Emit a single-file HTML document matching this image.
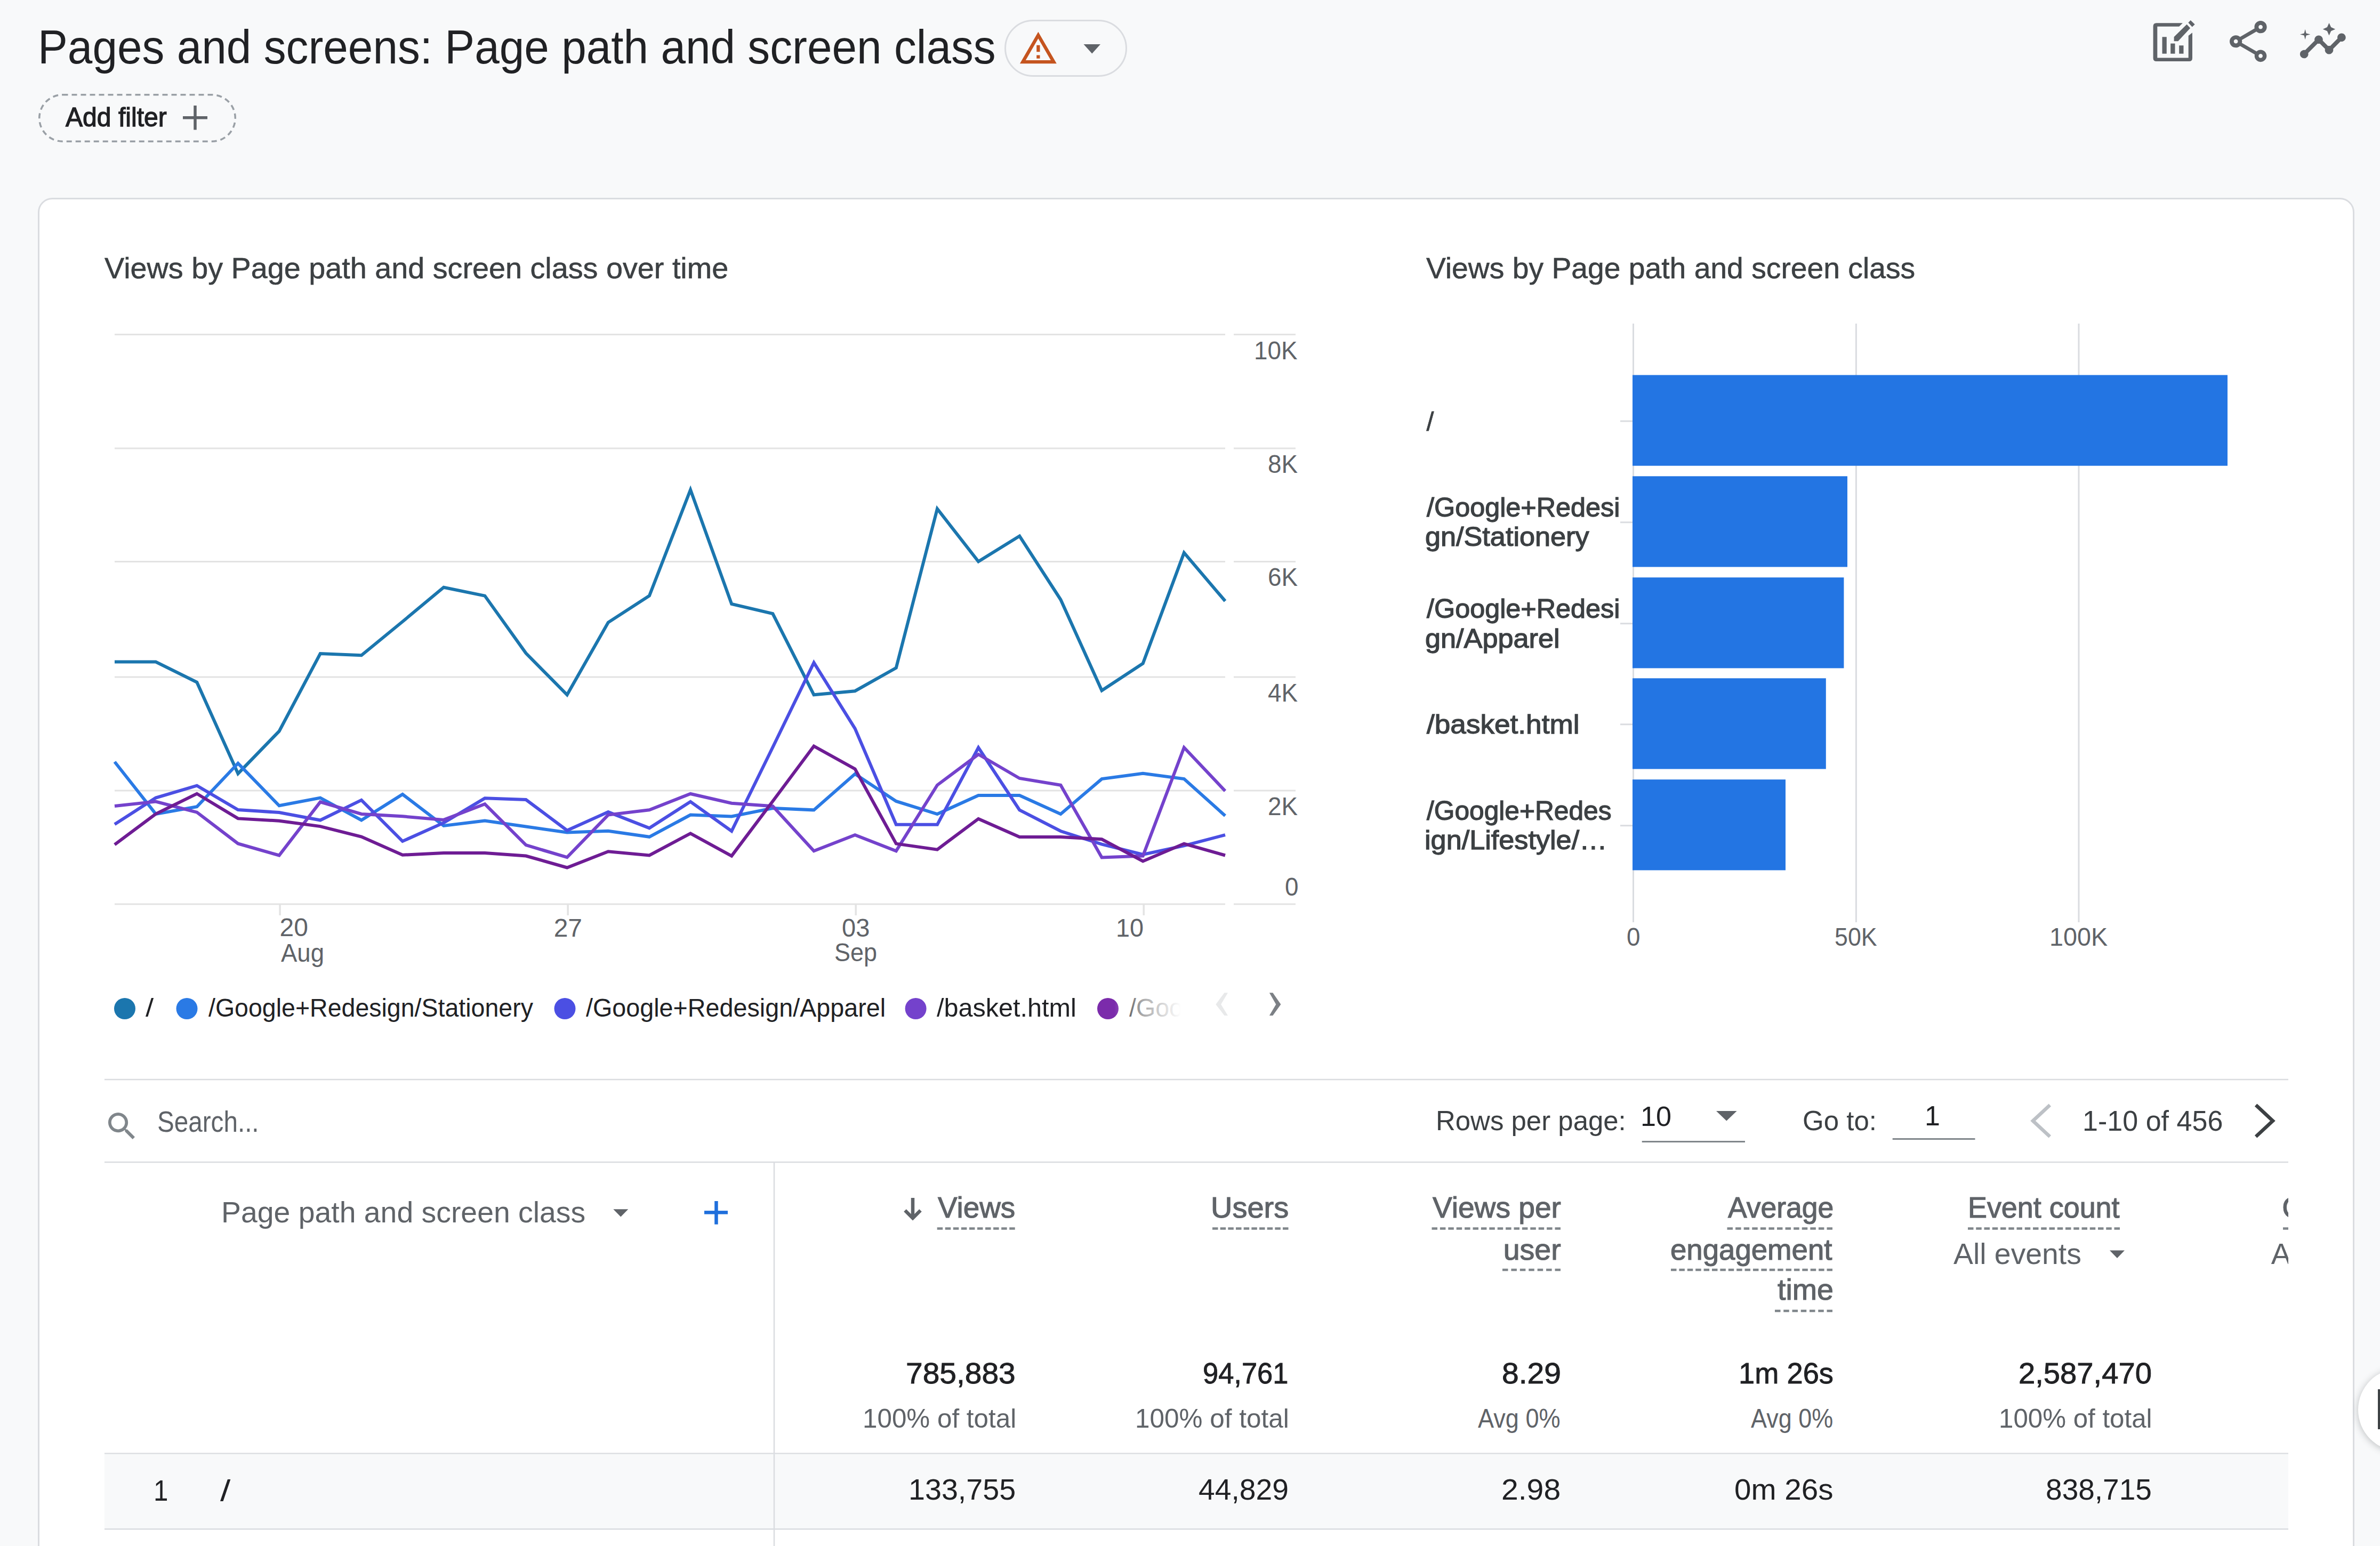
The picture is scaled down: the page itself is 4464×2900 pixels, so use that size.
<!DOCTYPE html>
<html><head><meta charset="utf-8"><title>Pages and screens</title>
<style>
html,body{margin:0;padding:0;}
@media (min-width:2200px) and (max-width:2260px){html{zoom:0.5;}}
@media (min-width:1470px) and (max-width:1500px){html{zoom:0.33333;}}
body{width:4464px;height:2900px;overflow:hidden;background:#f8f9fa;position:relative;font-family:"Liberation Sans",sans-serif;}
.card{position:absolute;left:70.5px;top:370.5px;width:4345px;height:2700px;background:#fff;border:3px solid #dadce0;border-radius:27px;box-sizing:border-box;}
.ov{position:absolute;left:0;top:0;}
.t{position:absolute;white-space:nowrap;transform-origin:0 0;font-family:"Liberation Sans",sans-serif;}
.fade{position:absolute;left:2090px;top:1850px;width:175px;height:80px;background:linear-gradient(90deg,rgba(255,255,255,0) 0px,rgba(255,255,255,0.6) 50px,#fff 125px,#fff 175px);}
.fab{position:absolute;left:4423px;top:2567px;width:155px;height:155px;border-radius:50%;background:#fff;box-shadow:0 2px 14px rgba(60,64,67,.32);}
.fab i{position:absolute;left:37px;top:39px;width:5px;height:75px;background:#3c4043;}
.clipC{position:absolute;left:196px;top:2180px;width:4096px;height:300px;overflow:hidden;}
</style></head><body>
<div class="card"></div>
<svg class="ov" width="4464" height="2900" viewBox="0 0 4464 2900"><rect x="1885.5" y="38.5" width="227" height="104" rx="52" fill="none" stroke="#dadce0" stroke-width="3"/>
<g transform="translate(1909.8 53.5) scale(3.13)"><path fill="#c5541f" d="M12 5.99L19.53 19H4.47L12 5.99M12 2L1 21h22L12 2zm1 14h-2v2h2v-2zm0-6h-2v4h2v-4z"/></g>
<path d="M2032.50 83.00L2064.00 83.00L2048.25 100.50Z" fill="#5f6368" stroke="none" stroke-width="0.00" />
<rect x="73.75" y="177.75" width="367.5" height="87.5" rx="43.75" fill="none" stroke="#9aa0a6" stroke-width="3.5" stroke-dasharray="10 7"/>
<rect x="343.00" y="218.00" width="46.00" height="5.50" fill="#5f6368" />
<rect x="363.25" y="198.00" width="5.50" height="45.50" fill="#5f6368" />
<path d="M4093.9 43.2 L4044.6 43.2 Q4038.6 43.2 4038.6 49.2 L4038.6 109.1 Q4038.6 115.1 4044.6 115.1 L4106 115.1 Q4112 115.1 4112 109.1 L4112 61.3 L4104.7 66.9 L4104.7 108.4 L4046.3 108.4 L4046.3 49.7 L4087.2 49.7 Z" fill="#5f6368"/>
<rect x="4055.50" y="69.30" width="8.30" height="31.40" fill="#5f6368" />
<rect x="4071.20" y="81.60" width="8.30" height="19.10" fill="#5f6368" />
<rect x="4087.20" y="85.30" width="8.30" height="15.40" fill="#5f6368" />
<path d="M4077.6 69.3 L4101.6 45.7 L4108.1 52.7 L4085.3 77.3 L4077.6 77.3 Z" fill="#5f6368" stroke="none" stroke-width="0.00" />
<path d="M4108.7 38 L4116.7 45.7 L4111.7 50.5 L4104.4 42.6 Z" fill="#5f6368" stroke="none" stroke-width="0.00" />
<g transform="translate(4170.4 31.3) scale(3.87)"><path fill="#5f6368" d="M18 16.08c-.76 0-1.44.3-1.96.77L8.91 12.7c.05-.23.09-.46.09-.7s-.04-.47-.09-.7l7.05-4.11c.54.5 1.25.81 2.04.81 1.66 0 3-1.34 3-3s-1.34-3-3-3-3 1.34-3 3c0 .24.04.47.09.7L8.04 9.81C7.5 9.31 6.79 9 6 9c-1.66 0-3 1.34-3 3s1.34 3 3 3c.79 0 1.5-.31 2.04-.81l7.12 4.16c-.05.21-.08.43-.08.65 0 1.61 1.31 2.92 2.92 2.92s2.92-1.310 2.92-2.92-1.31-2.92-2.92-2.92zM18 4c.55 0 1 .45 1 1s-.45 1-1 1-1-.45-1-1 .45-1 1-1zM6 13c-.55 0-1-.45-1-1s.45-1 1-1 1 .45 1 1-.45 1-1 1zm12 7.02c-.55 0-1-.45-1-1s.45-1 1-1 1 .45 1 1-.45 1-1 1z"/></g>
<g transform="translate(4310 31.3) scale(3.9)"><path fill="#5f6368" d="M21 8c-1.45 0-2.26 1.44-1.930 2.51l-3.550 3.56c-.3-.09-.74-.09-1.04 0l-2.55-2.55C12.27 10.45 11.46 9 10 9c-1.45 0-2.27 1.44-1.93 2.52l-4.56 4.55C2.44 15.74 1 16.55 1 18c0 1.1.9 2 2 2 1.45 0 2.26-1.44 1.93-2.51l4.55-4.56c.3.09.74.09 1.04 0l2.55 2.55C12.73 16.55 13.54 18 15 18c1.45 0 2.27-1.44 1.93-2.52l3.56-3.55c1.07.33 2.51-.48 2.51-1.93 0-1.1-.9-2-2-2z"/><path fill="#5f6368" d="M15 9l.94-2.07L18 6l-2.06-.93L15 3l-.92 2.07L12 6l2.08.93zM3.5 11L4 9l2-.5L4 8l-.5-2L3 8l-2 .5L3 9z"/></g>
<line x1="215.00" y1="627.50" x2="2298.00" y2="627.50" stroke="#e3e3e3" stroke-width="3.00" />
<line x1="2314.00" y1="627.50" x2="2430.00" y2="627.50" stroke="#e3e3e3" stroke-width="3.00" />
<line x1="215.00" y1="841.00" x2="2298.00" y2="841.00" stroke="#e3e3e3" stroke-width="3.00" />
<line x1="2314.00" y1="841.00" x2="2430.00" y2="841.00" stroke="#e3e3e3" stroke-width="3.00" />
<line x1="215.00" y1="1053.50" x2="2298.00" y2="1053.50" stroke="#e3e3e3" stroke-width="3.00" />
<line x1="2314.00" y1="1053.50" x2="2430.00" y2="1053.50" stroke="#e3e3e3" stroke-width="3.00" />
<line x1="215.00" y1="1270.00" x2="2298.00" y2="1270.00" stroke="#e3e3e3" stroke-width="3.00" />
<line x1="2314.00" y1="1270.00" x2="2430.00" y2="1270.00" stroke="#e3e3e3" stroke-width="3.00" />
<line x1="215.00" y1="1483.00" x2="2298.00" y2="1483.00" stroke="#e3e3e3" stroke-width="3.00" />
<line x1="2314.00" y1="1483.00" x2="2430.00" y2="1483.00" stroke="#e3e3e3" stroke-width="3.00" />
<line x1="215.00" y1="1696.00" x2="2298.00" y2="1696.00" stroke="#e3e3e3" stroke-width="3.00" />
<line x1="2314.00" y1="1696.00" x2="2430.00" y2="1696.00" stroke="#e3e3e3" stroke-width="3.00" />
<line x1="525.09" y1="1695.00" x2="525.09" y2="1717.00" stroke="#e3e3e3" stroke-width="3.50" />
<line x1="1065.13" y1="1695.00" x2="1065.13" y2="1717.00" stroke="#e3e3e3" stroke-width="3.50" />
<line x1="1605.17" y1="1695.00" x2="1605.17" y2="1717.00" stroke="#e3e3e3" stroke-width="3.50" />
<line x1="2145.20" y1="1695.00" x2="2145.20" y2="1717.00" stroke="#e3e3e3" stroke-width="3.50" />
<polyline points="215.00,1241.60 292.15,1241.60 369.30,1279.70 446.44,1451.20 523.59,1371.60 600.74,1226.00 677.89,1229.20 755.04,1166.00 832.19,1101.70 909.33,1117.60 986.48,1225.30 1063.63,1303.30 1140.78,1167.60 1217.93,1117.60 1295.07,918.70 1372.22,1133.00 1449.37,1151.20 1526.52,1303.30 1603.67,1296.20 1680.81,1252.80 1757.96,954.40 1835.11,1053.30 1912.26,1005.50 1989.41,1124.80 2066.56,1295.20 2143.70,1244.60 2220.85,1036.90 2298.00,1127.50" fill="none" stroke="#1b76ae" stroke-width="6" stroke-linejoin="miter" stroke-miterlimit="10"/>
<polyline points="215.00,1429.00 292.15,1526.90 369.30,1513.30 446.44,1431.80 523.59,1511.30 600.74,1496.60 677.89,1538.50 755.04,1490.00 832.19,1548.90 909.33,1539.60 986.48,1550.50 1063.63,1561.50 1140.78,1558.80 1217.93,1569.80 1295.07,1528.60 1372.22,1531.50 1449.37,1516.00 1526.52,1519.40 1603.67,1451.80 1680.81,1502.90 1757.96,1527.00 1835.11,1491.90 1912.26,1491.90 1989.41,1527.00 2066.56,1461.10 2143.70,1450.70 2220.85,1461.10 2298.00,1530.30" fill="none" stroke="#2a7ae5" stroke-width="6" stroke-linejoin="miter" stroke-miterlimit="10"/>
<polyline points="215.00,1546.30 292.15,1496.60 369.30,1473.70 446.44,1519.00 523.59,1524.00 600.74,1538.50 677.89,1500.90 755.04,1578.00 832.19,1543.40 909.33,1497.30 986.48,1500.00 1063.63,1557.70 1140.78,1523.10 1217.93,1553.30 1295.07,1503.80 1372.22,1559.00 1449.37,1401.80 1526.52,1243.00 1603.67,1366.60 1680.81,1546.80 1757.96,1546.80 1835.11,1402.30 1912.26,1519.40 1989.41,1559.00 2066.56,1583.70 2143.70,1603.00 2220.85,1586.40 2298.00,1566.10" fill="none" stroke="#4b4fe3" stroke-width="6" stroke-linejoin="miter" stroke-miterlimit="10"/>
<polyline points="215.00,1512.00 292.15,1503.60 369.30,1523.70 446.44,1582.40 523.59,1604.50 600.74,1504.30 677.89,1526.90 755.04,1531.30 832.19,1537.90 909.33,1508.20 986.48,1585.20 1063.63,1608.20 1140.78,1528.60 1217.93,1519.20 1295.07,1489.00 1372.22,1506.70 1449.37,1512.20 1526.52,1596.30 1603.67,1566.10 1680.81,1596.30 1757.96,1472.70 1835.11,1415.00 1912.26,1460.00 1989.41,1472.70 2066.56,1608.40 2143.70,1605.60 2220.85,1402.30 2298.00,1483.70" fill="none" stroke="#7442cc" stroke-width="6" stroke-linejoin="miter" stroke-miterlimit="10"/>
<polyline points="215.00,1584.30 292.15,1526.90 369.30,1488.80 446.44,1535.40 523.59,1539.70 600.74,1550.10 677.89,1569.50 755.04,1603.80 832.19,1600.00 909.33,1600.00 986.48,1605.50 1063.63,1627.50 1140.78,1597.30 1217.93,1604.40 1295.07,1563.30 1372.22,1605.60 1449.37,1503.00 1526.52,1399.60 1603.67,1442.40 1680.81,1582.60 1757.96,1593.60 1835.11,1535.90 1912.26,1570.00 1989.41,1570.00 2066.56,1574.30 2143.70,1615.50 2220.85,1582.60 2298.00,1604.50" fill="none" stroke="#6e1c94" stroke-width="6" stroke-linejoin="miter" stroke-miterlimit="10"/>
<circle cx="234.00" cy="1892" r="20" fill="#1b76ae"/>
<circle cx="350.50" cy="1892" r="20" fill="#2a7ae5"/>
<circle cx="1059.50" cy="1892" r="20" fill="#4b4fe3"/>
<circle cx="1717.60" cy="1892" r="20" fill="#7442cc"/>
<circle cx="2078.00" cy="1892" r="20" fill="#7b2bab"/>
<line x1="3063.50" y1="607.00" x2="3063.50" y2="1730.00" stroke="#dadce0" stroke-width="3.00" />
<line x1="3481.40" y1="607.00" x2="3481.40" y2="1730.00" stroke="#dadce0" stroke-width="3.00" />
<line x1="3899.00" y1="607.00" x2="3899.00" y2="1730.00" stroke="#dadce0" stroke-width="3.00" />
<rect x="3062.00" y="703.50" width="1116.00" height="170.20" fill="#2375e3" />
<line x1="3039.00" y1="790.00" x2="3062.00" y2="790.00" stroke="#dadce0" stroke-width="3.00" />
<rect x="3062.00" y="893.30" width="403.00" height="170.20" fill="#2375e3" />
<line x1="3039.00" y1="979.80" x2="3062.00" y2="979.80" stroke="#dadce0" stroke-width="3.00" />
<rect x="3062.00" y="1083.20" width="396.40" height="170.20" fill="#2375e3" />
<line x1="3039.00" y1="1169.70" x2="3062.00" y2="1169.70" stroke="#dadce0" stroke-width="3.00" />
<rect x="3062.00" y="1272.30" width="362.80" height="170.20" fill="#2375e3" />
<line x1="3039.00" y1="1358.80" x2="3062.00" y2="1358.80" stroke="#dadce0" stroke-width="3.00" />
<rect x="3062.00" y="1462.20" width="287.00" height="170.20" fill="#2375e3" />
<line x1="3039.00" y1="1548.70" x2="3062.00" y2="1548.70" stroke="#dadce0" stroke-width="3.00" />
<line x1="196.00" y1="2025.00" x2="4292.00" y2="2025.00" stroke="#dadce0" stroke-width="2.50" />
<line x1="196.00" y1="2180.00" x2="4292.00" y2="2180.00" stroke="#dadce0" stroke-width="2.50" />
<g transform="translate(194.4 2078.4) scale(2.86)"><path fill="#80868b" d="M15.5 14h-.79l-.28-.27C15.41 12.590 16 11.11 16 9.5 16 5.91 13.09 3 9.5 3S3 5.91 3 9.5 5.91 16 9.5 16c1.61 0 3.09-.59 4.23-1.57l.27.28v.79l5 4.99L20.49 19l-4.99-5zm-6 0C7.01 14 5 11.990 5 9.5S7.01 5 9.5 5 14 7.01 14 9.5 11.99 14 9.5 14z"/></g>
<path d="M3219.00 2084.00L3257.60 2084.00L3238.30 2102.50Z" fill="#5f6368" stroke="none" stroke-width="0.00" />
<line x1="3079.70" y1="2141.40" x2="3273.00" y2="2141.40" stroke="#80868b" stroke-width="3.00" />
<line x1="3549.70" y1="2136.50" x2="3704.50" y2="2136.50" stroke="#80868b" stroke-width="3.00" />
<path d="M3842.5 2075 L3813 2102.5 L3842.5 2130" fill="none" stroke="#bdc1c6" stroke-width="6.50" stroke-linecap="square"/>
<path d="M4233.5 2075 L4263 2102.5 L4233.5 2130" fill="none" stroke="#3c4043" stroke-width="6.50" stroke-linecap="square"/>
<path d="M2303 1862.3 L2296.5 1862.3 L2280.3 1883.9 L2296.5 1905.1 L2303 1905.1 L2290.1 1883.9 Z" fill="#e8e9ea" stroke="none" stroke-width="0.00" />
<path d="M2380.9 1862.3 L2387.3 1862.3 L2402.4 1883.9 L2387.3 1905.1 L2380.9 1905.1 L2393.3 1883.9 Z" fill="#7c8085" stroke="none" stroke-width="0.00" />
<line x1="1452.00" y1="2180.00" x2="1452.00" y2="2900.00" stroke="#dadce0" stroke-width="2.50" />
<path d="M1150.30 2268.20L1178.30 2268.20L1164.30 2282.60Z" fill="#5f6368" stroke="none" stroke-width="0.00" />
<rect x="1321.00" y="2271.10" width="44.00" height="6.50" fill="#1f6fdc" />
<rect x="1340.20" y="2253.00" width="6.50" height="43.70" fill="#1f6fdc" />
<line x1="1712.00" y1="2247.00" x2="1712.00" y2="2283.00" stroke="#5f6368" stroke-width="6.50" />
<path d="M1697.5 2270.5 L1712 2285 L1726.5 2270.5" fill="none" stroke="#5f6368" stroke-width="6.50" />
<path d="M3957.00 2345.50L3985.00 2345.50L3971.00 2360.00Z" fill="#5f6368" stroke="none" stroke-width="0.00" />
<line x1="1757.70" y1="2304.50" x2="1903.70" y2="2304.50" stroke="#80868b" stroke-width="4.5" stroke-dasharray="10.500 4.556"/>
<line x1="2274.00" y1="2304.50" x2="2416.50" y2="2304.50" stroke="#80868b" stroke-width="4.5" stroke-dasharray="10.500 4.167"/>
<line x1="2685.50" y1="2304.50" x2="2927.00" y2="2304.50" stroke="#80868b" stroke-width="4.5" stroke-dasharray="10.500 4.900"/>
<line x1="2818.00" y1="2382.00" x2="2927.00" y2="2382.00" stroke="#80868b" stroke-width="4.5" stroke-dasharray="10.500 5.917"/>
<line x1="3239.50" y1="2304.50" x2="3437.00" y2="2304.50" stroke="#80868b" stroke-width="4.5" stroke-dasharray="10.500 5.083"/>
<line x1="3134.00" y1="2382.00" x2="3437.00" y2="2382.00" stroke="#80868b" stroke-width="4.5" stroke-dasharray="10.500 4.895"/>
<line x1="3329.00" y1="2459.00" x2="3437.00" y2="2459.00" stroke="#80868b" stroke-width="4.5" stroke-dasharray="10.500 5.750"/>
<line x1="3691.00" y1="2304.50" x2="3976.00" y2="2304.50" stroke="#80868b" stroke-width="4.5" stroke-dasharray="10.500 4.750"/>
<line x1="4282.00" y1="2304.50" x2="4292.00" y2="2304.50" stroke="#80868b" stroke-width="4.5" stroke-dasharray="10.000 -10.000"/>
<line x1="196.00" y1="2726.50" x2="4292.00" y2="2726.50" stroke="#dadce0" stroke-width="2.50" />
<rect x="196.00" y="2727.75" width="4096.00" height="139.25" fill="#f8f9fa" />
<line x1="196.00" y1="2868.30" x2="4292.00" y2="2868.30" stroke="#dadce0" stroke-width="2.50" />
<line x1="1452.00" y1="2727.75" x2="1452.00" y2="2867.00" stroke="#dadce0" stroke-width="2.50" /></svg>
<div class="t" style="left:70.78px;top:44.00px;font-size:89.00px;line-height:89.00px;color:#202124;transform:scaleX(0.9408)">Pages and screens: Page path and screen class</div>
<div class="t" style="left:123.00px;top:195.00px;font-size:50.00px;line-height:50.00px;color:#202124;transform:scaleX(0.9618);-webkit-text-stroke:1.30px #202124">Add filter</div>
<div class="t" style="left:196.15px;top:475.00px;font-size:56.00px;line-height:56.00px;color:#3c4043;transform:scaleX(0.9954);-webkit-text-stroke:0.60px #3c4043">Views by Page path and screen class over time</div>
<div class="t" style="left:2674.75px;top:475.00px;font-size:56.00px;line-height:56.00px;color:#3c4043;transform:scaleX(0.9865);-webkit-text-stroke:0.60px #3c4043">Views by Page path and screen class</div>
<div class="t" style="left:2352.22px;top:634.00px;font-size:48.00px;line-height:48.00px;color:#5f6368;transform:scaleX(0.9550)">10K</div>
<div class="t" style="left:2377.77px;top:846.50px;font-size:48.00px;line-height:48.00px;color:#5f6368;transform:scaleX(0.9550)">8K</div>
<div class="t" style="left:2377.77px;top:1059.30px;font-size:48.00px;line-height:48.00px;color:#5f6368;transform:scaleX(0.9550)">6K</div>
<div class="t" style="left:2377.77px;top:1276.00px;font-size:48.00px;line-height:48.00px;color:#5f6368;transform:scaleX(0.9550)">4K</div>
<div class="t" style="left:2377.77px;top:1489.20px;font-size:48.00px;line-height:48.00px;color:#5f6368;transform:scaleX(0.9550)">2K</div>
<div class="t" style="left:2409.76px;top:1639.60px;font-size:48.00px;line-height:48.00px;color:#5f6368;transform:scaleX(0.9550)">0</div>
<div class="t" style="left:524.50px;top:1716.00px;font-size:48.00px;line-height:48.00px;color:#5f6368">20</div>
<div class="t" style="left:527.00px;top:1763.60px;font-size:48.00px;line-height:48.00px;color:#5f6368;transform:scaleX(0.9483)">Aug</div>
<div class="t" style="left:1038.65px;top:1716.50px;font-size:48.00px;line-height:48.00px;color:#5f6368">27</div>
<div class="t" style="left:1579.24px;top:1716.50px;font-size:48.00px;line-height:48.00px;color:#5f6368;transform:scaleX(0.9798)">03</div>
<div class="t" style="left:1565.40px;top:1763.00px;font-size:48.00px;line-height:48.00px;color:#5f6368;transform:scaleX(0.9354)">Sep</div>
<div class="t" style="left:2093.04px;top:1716.50px;font-size:48.00px;line-height:48.00px;color:#5f6368;transform:scaleX(0.9759)">10</div>
<div class="t" style="left:273.00px;top:1867.00px;font-size:48.00px;line-height:48.00px;color:#202124;transform:scaleX(1.1321)">/</div>
<div class="t" style="left:391.00px;top:1867.00px;font-size:48.00px;line-height:48.00px;color:#202124;transform:scaleX(0.9690)">/Google+Redesign/Stationery</div>
<div class="t" style="left:1099.00px;top:1867.00px;font-size:48.00px;line-height:48.00px;color:#202124;transform:scaleX(0.9730)">/Google+Redesign/Apparel</div>
<div class="t" style="left:1756.50px;top:1867.00px;font-size:48.00px;line-height:48.00px;color:#202124;transform:scaleX(1.0117)">/basket.html</div>
<div class="t" style="left:2118.00px;top:1867.00px;font-size:48.00px;line-height:48.00px;color:#202124;transform:scaleX(0.9700)">/Goog</div>
<div class="t" style="left:2675.50px;top:766.00px;font-size:50.00px;line-height:50.00px;color:#3c4043;-webkit-text-stroke:0.80px #3c4043">/</div>
<div class="t" style="left:2675.50px;top:927.00px;font-size:50.00px;line-height:50.00px;color:#3c4043;transform:scaleX(1.0070);-webkit-text-stroke:1.30px #3c4043">/Google+Redesi</div>
<div class="t" style="left:2673.41px;top:981.50px;font-size:50.00px;line-height:50.00px;color:#3c4043;transform:scaleX(1.0439);-webkit-text-stroke:1.30px #3c4043">gn/Stationery</div>
<div class="t" style="left:2675.50px;top:1117.00px;font-size:50.00px;line-height:50.00px;color:#3c4043;transform:scaleX(1.0070);-webkit-text-stroke:1.30px #3c4043">/Google+Redesi</div>
<div class="t" style="left:2673.41px;top:1173.00px;font-size:50.00px;line-height:50.00px;color:#3c4043;transform:scaleX(1.0444);-webkit-text-stroke:1.30px #3c4043">gn/Apparel</div>
<div class="t" style="left:2675.50px;top:1333.80px;font-size:50.00px;line-height:50.00px;color:#3c4043;transform:scaleX(1.0629);-webkit-text-stroke:1.30px #3c4043">/basket.html</div>
<div class="t" style="left:2675.50px;top:1496.00px;font-size:50.00px;line-height:50.00px;color:#3c4043;transform:scaleX(0.9934);-webkit-text-stroke:1.30px #3c4043">/Google+Redes</div>
<div class="t" style="left:2672.11px;top:1551.00px;font-size:50.00px;line-height:50.00px;color:#3c4043;transform:scaleX(1.0440);-webkit-text-stroke:1.30px #3c4043">ign/Lifestyle/…</div>
<div class="t" style="left:3050.85px;top:1734.00px;font-size:48.00px;line-height:48.00px;color:#5f6368;transform:scaleX(0.9550)">0</div>
<div class="t" style="left:3441.43px;top:1734.00px;font-size:48.00px;line-height:48.00px;color:#5f6368;transform:scaleX(0.9325)">50K</div>
<div class="t" style="left:3843.85px;top:1734.00px;font-size:48.00px;line-height:48.00px;color:#5f6368;transform:scaleX(0.9745)">100K</div>
<div class="t" style="left:294.84px;top:2077.00px;font-size:55.00px;line-height:55.00px;color:#5f6368;transform:scaleX(0.8659)">Search...</div>
<div class="t" style="left:2692.84px;top:2076.00px;font-size:52.00px;line-height:52.00px;color:#3c4043;transform:scaleX(0.9796)">Rows per page:</div>
<div class="t" style="left:3077.48px;top:2068.00px;font-size:52.00px;line-height:52.00px;color:#202124;transform:scaleX(1.0038)">10</div>
<div class="t" style="left:3380.55px;top:2076.00px;font-size:52.00px;line-height:52.00px;color:#3c4043;transform:scaleX(0.9814)">Go to:</div>
<div class="t" style="left:3610.00px;top:2067.00px;font-size:52.00px;line-height:52.00px;color:#202124">1</div>
<div class="t" style="left:3905.54px;top:2075.00px;font-size:54.00px;line-height:54.00px;color:#3c4043;transform:scaleX(0.9640)">1-10 of 456</div>
<div class="t" style="left:414.85px;top:2246.40px;font-size:56.00px;line-height:56.00px;color:#5f6368;transform:scaleX(0.9886)">Page path and screen class</div>
<div class="t" style="left:1759.05px;top:2238.30px;font-size:55.50px;line-height:55.50px;color:#5f6368;transform:scaleX(0.9872);-webkit-text-stroke:1.20px #5f6368">Views</div>
<div class="t" style="left:2271.31px;top:2238.30px;font-size:55.50px;line-height:55.50px;color:#5f6368;transform:scaleX(1.0083);-webkit-text-stroke:1.20px #5f6368">Users</div>
<div class="t" style="left:2686.75px;top:2238.30px;font-size:55.50px;line-height:55.50px;color:#5f6368;transform:scaleX(0.9925);-webkit-text-stroke:1.20px #5f6368">Views per</div>
<div class="t" style="left:2819.70px;top:2316.80px;font-size:55.50px;line-height:55.50px;color:#5f6368;-webkit-text-stroke:1.20px #5f6368">user</div>
<div class="t" style="left:3240.76px;top:2238.30px;font-size:55.50px;line-height:55.50px;color:#5f6368;transform:scaleX(0.9635);-webkit-text-stroke:1.20px #5f6368">Average</div>
<div class="t" style="left:3133.49px;top:2317.00px;font-size:55.50px;line-height:55.50px;color:#5f6368;transform:scaleX(0.9833);-webkit-text-stroke:1.20px #5f6368">engagement</div>
<div class="t" style="left:3334.10px;top:2391.60px;font-size:55.50px;line-height:55.50px;color:#5f6368;-webkit-text-stroke:1.20px #5f6368">time</div>
<div class="t" style="left:3690.83px;top:2238.30px;font-size:55.50px;line-height:55.50px;color:#5f6368;transform:scaleX(0.9707);-webkit-text-stroke:1.20px #5f6368">Event count</div>
<div class="t" style="left:3663.95px;top:2324.50px;font-size:55.50px;line-height:55.50px;color:#5f6368;transform:scaleX(0.9969)">All events</div>
<div class="t" style="left:4280.25px;top:2238.30px;font-size:55.50px;line-height:55.50px;color:#5f6368;-webkit-text-stroke:1.20px #5f6368">C</div>
<div class="t" style="left:4259.75px;top:2324.50px;font-size:55.50px;line-height:55.50px;color:#5f6368">A</div>
<div class="t" style="left:1699.15px;top:2548.50px;font-size:55.00px;line-height:55.00px;color:#202124;transform:scaleX(1.0348);-webkit-text-stroke:0.90px #202124">785,883</div>
<div class="t" style="left:2256.22px;top:2548.50px;font-size:55.00px;line-height:55.00px;color:#202124;transform:scaleX(0.9538);-webkit-text-stroke:0.90px #202124">94,761</div>
<div class="t" style="left:2816.57px;top:2548.50px;font-size:55.00px;line-height:55.00px;color:#202124;transform:scaleX(1.0357);-webkit-text-stroke:0.90px #202124">8.29</div>
<div class="t" style="left:3260.71px;top:2548.50px;font-size:55.00px;line-height:55.00px;color:#202124;transform:scaleX(0.9868);-webkit-text-stroke:0.90px #202124">1m 26s</div>
<div class="t" style="left:3785.59px;top:2548.50px;font-size:55.00px;line-height:55.00px;color:#202124;transform:scaleX(1.0215);-webkit-text-stroke:0.90px #202124">2,587,470</div>
<div class="t" style="left:1617.70px;top:2636.00px;font-size:50.00px;line-height:50.00px;color:#5f6368;transform:scaleX(0.9872)">100% of total</div>
<div class="t" style="left:2128.79px;top:2636.00px;font-size:50.00px;line-height:50.00px;color:#5f6368;transform:scaleX(0.9896)">100% of total</div>
<div class="t" style="left:2771.60px;top:2636.00px;font-size:50.00px;line-height:50.00px;color:#5f6368;transform:scaleX(0.9025)">Avg 0%</div>
<div class="t" style="left:3284.00px;top:2636.00px;font-size:50.00px;line-height:50.00px;color:#5f6368;transform:scaleX(0.8990)">Avg 0%</div>
<div class="t" style="left:3749.11px;top:2636.00px;font-size:50.00px;line-height:50.00px;color:#5f6368;transform:scaleX(0.9851)">100% of total</div>
<div class="t" style="left:287.89px;top:2768.50px;font-size:55.00px;line-height:55.00px;color:#202124;transform:scaleX(0.8968)">1</div>
<div class="t" style="left:412.70px;top:2768.50px;font-size:55.00px;line-height:55.00px;color:#202124;transform:scaleX(1.2656)">/</div>
<div class="t" style="left:1703.70px;top:2767.00px;font-size:55.00px;line-height:55.00px;color:#202124;transform:scaleX(1.0117)">133,755</div>
<div class="t" style="left:2247.95px;top:2767.00px;font-size:55.00px;line-height:55.00px;color:#202124;transform:scaleX(1.0036)">44,829</div>
<div class="t" style="left:2816.04px;top:2767.00px;font-size:55.00px;line-height:55.00px;color:#202124;transform:scaleX(1.0382)">2.98</div>
<div class="t" style="left:3253.24px;top:2767.00px;font-size:55.00px;line-height:55.00px;color:#202124;transform:scaleX(1.0287)">0m 26s</div>
<div class="t" style="left:3837.05px;top:2767.00px;font-size:55.00px;line-height:55.00px;color:#202124">838,715</div>
<div class="fade"></div>
<div style="position:absolute;left:4292px;top:2200px;width:120px;height:220px;background:#fff"></div>
<div class="fab"><i></i></div>
</body></html>
